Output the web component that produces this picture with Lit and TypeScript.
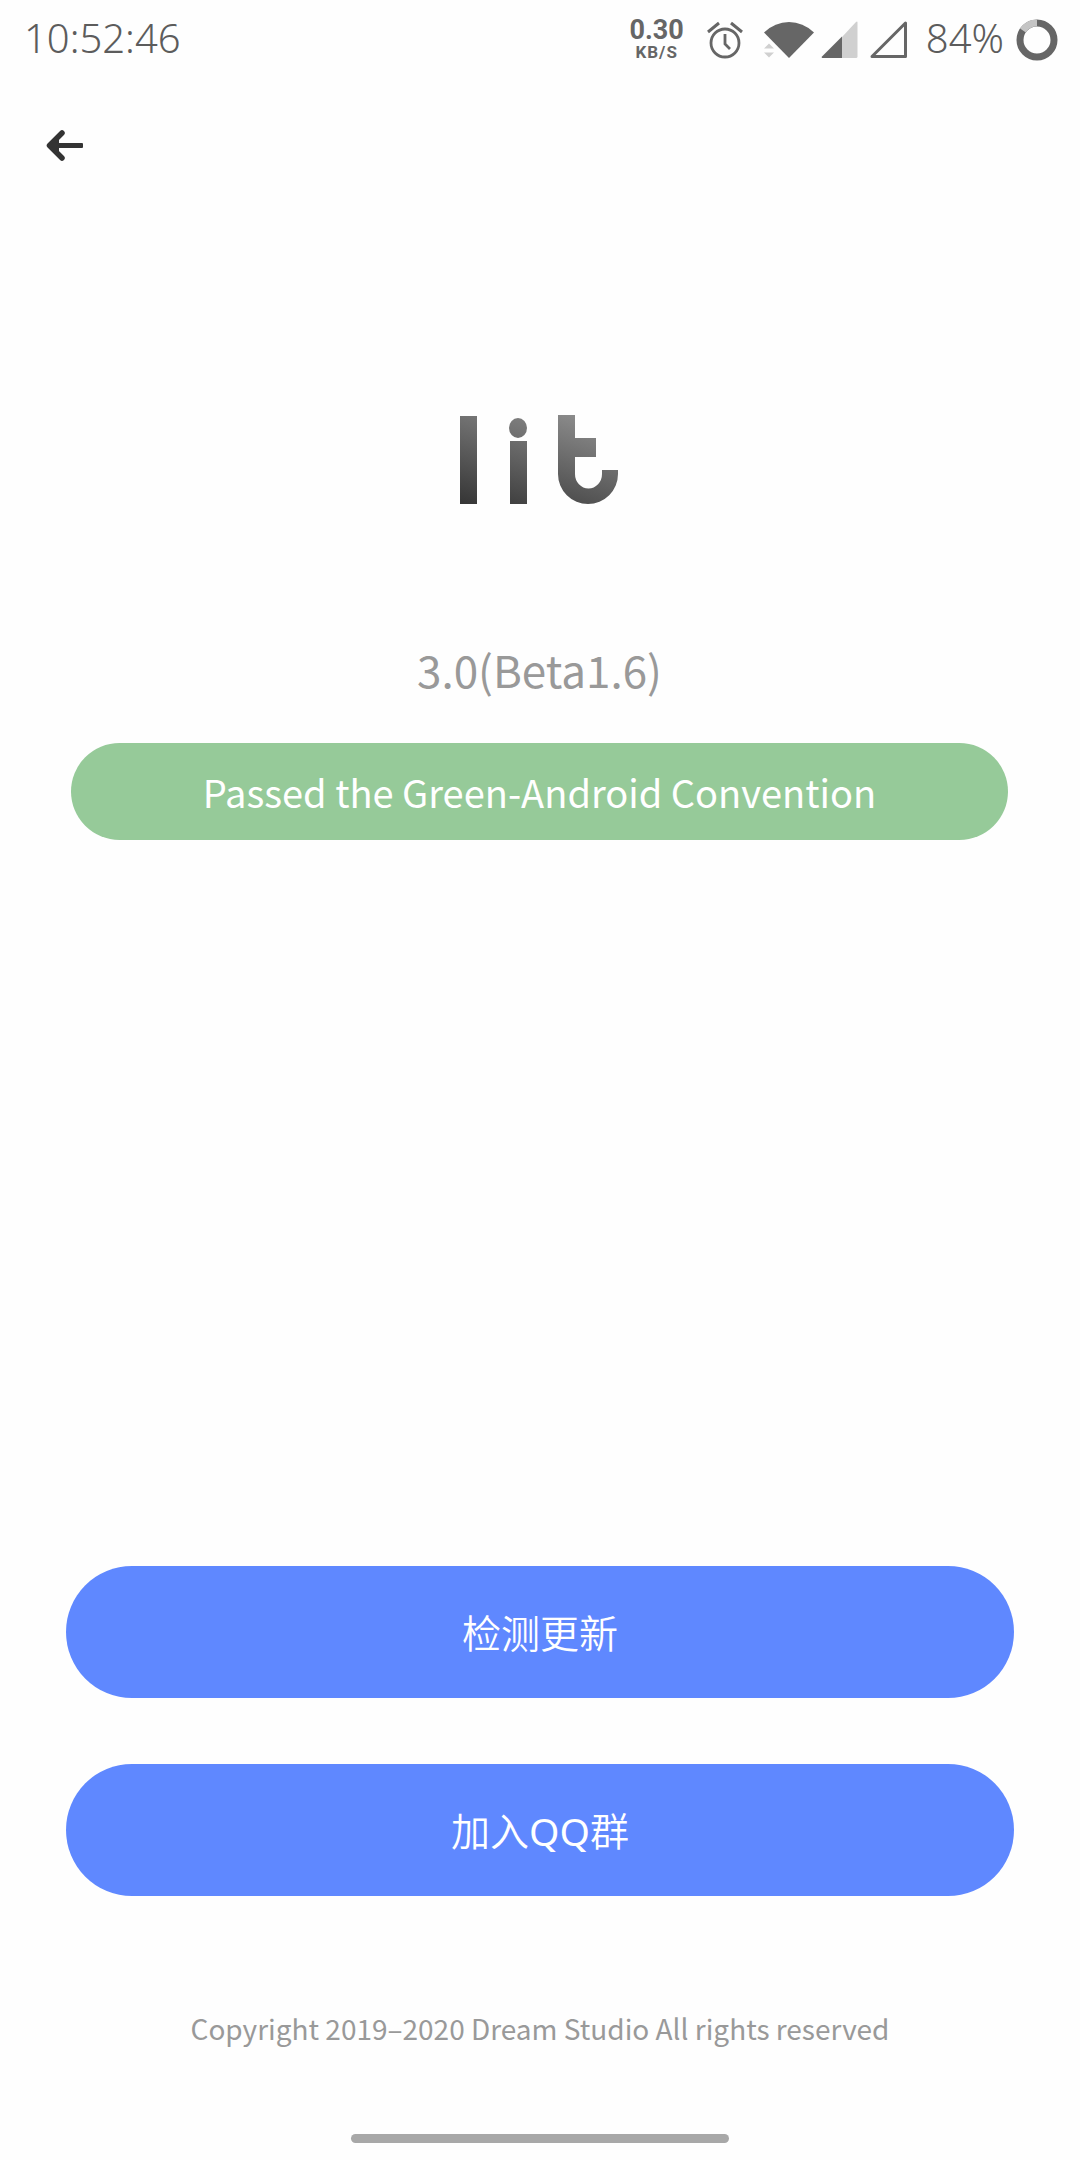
import { LitElement, html, css, svg } from "lit";
import { customElement, property } from "lit/decorators.js";

@customElement("status-bar")
class StatusBar extends LitElement {
  @property() time = "";
  @property() speed = "";
  @property({ type: Number }) battery = 0;

  static styles = css`
    :host {
      display: flex;
      align-items: center;
      justify-content: space-between;
      height: 80px;
      padding: 0 20px 0 24px;
      color: #5c5c5c;
      font-family: "Noto Sans", sans-serif;
      font-size: 40px;
      font-weight: 300;
      line-height: 56px;
    }
    .time,
    .level {
      padding-bottom: 4px;
    }
    .tray {
      display: flex;
      align-items: center;
      gap: 4px;
    }
    .speed {
      display: flex;
      flex-direction: column;
      align-items: center;
      margin-right: 16px;
      color: #666;
      font-family: Roboto, sans-serif;
      font-weight: 700;
    }
    .rate {
      font-size: 27px;
      line-height: 24px;
    }
    .unit {
      font-size: 17px;
      line-height: 20px;
      letter-spacing: 1px;
    }
    .level {
      margin: 0 6px 0 12px;
    }
    svg {
      display: block;
    }
  `;

  render() {
    const c = 2 * Math.PI * 17;
    const gap = (c * (100 - this.battery)) / 100;
    return html`
      <span class="time">${this.time}</span>
      <div class="tray">
        <div class="speed">
          <span class="rate">${this.speed}</span>
          <span class="unit">KB/S</span>
        </div>
        <svg width="48" height="44" viewBox="0 0 48 44" fill="none" stroke="#666" stroke-width="2.800" aria-hidden="true">
          <circle cx="21" cy="25" r="14" />
          <path d="M21 16v10l5 5" />
          <path d="M4 14l11-9M38 14L27 5" stroke-width="3" />
        </svg>
        <svg width="60" height="44" viewBox="0 0 60 44" aria-hidden="true">
          <path d="M8 14.500Q19 4 33 4t25 10.500L33 40z" fill="#666" />
          <path d="M8 30.500l5-5 5 5zM8 34.500l5 5 5-5z" fill="#d0d0d0" />
        </svg>
        <svg width="40" height="44" viewBox="0 0 40 44" aria-hidden="true">
          <path d="M22 19L36 4q1.500-1 1.500.5V38.500q0 1.500-1.500 1.500H22z" fill="#d0d0d0" />
          <path d="M22 18.500V40H2.500q-1.500 0-.5-1.500z" fill="#666" />
        </svg>
        <svg width="46" height="44" viewBox="0 0 46 44" fill="none" aria-hidden="true">
          <path d="M41.500 5V38.500H8z" stroke="#666" stroke-width="3" stroke-linejoin="round" />
        </svg>
        <span class="level">${this.battery}%</span>
        <svg width="46" height="44" viewBox="0 0 46 44" fill="none" stroke-width="7" aria-hidden="true">
          <circle cx="23" cy="22" r="17" stroke="#666" />
          ${svg`<circle cx="23" cy="22" r="17" stroke="#c4c4c4"
            stroke-dasharray="${gap} ${c - gap}" stroke-dashoffset="${gap}"
            transform="rotate(-90 23 22)" />`}
        </svg>
      </div>
    `;
  }
}

@customElement("app-root")
class AppRoot extends LitElement {
  static styles = css`
    :host {
      display: flex;
      flex-direction: column;
      box-sizing: border-box;
      min-height: 100vh;
      background: #fefefe;
      color: #999;
      font-family: "Noto Sans CJK SC", "Noto Sans", sans-serif;
    }
    .toolbar {
      display: flex;
      padding: 28px 28px;
    }
    button {
      border: 0;
      font: inherit;
      cursor: pointer;
    }
    .back {
      padding: 12px 16px;
      background: none;
    }
    svg {
      display: block;
    }
    .hero {
      display: flex;
      flex-direction: column;
      align-items: center;
      flex: 1;
      padding: 201px 72px 0 71px;
    }
    h1,
    p {
      margin: 0;
      font-weight: 400;
    }
    .version {
      margin-top: 132px;
      font-size: 44px;
      line-height: 64px;
    }
    .badge {
      box-sizing: border-box;
      width: 100%;
      margin-top: 42px;
      padding: 20px;
      border-radius: 49px;
      background: #96ca99;
      color: #fff;
      font-size: 38px;
      line-height: 57px;
      text-align: center;
    }
    .actions {
      display: flex;
      flex-direction: column;
      gap: 66px;
      padding: 0 66px;
    }
    .action {
      padding: 39px 38px 37px;
      border-radius: 66px;
      background: #5f88ff;
      color: #fff;
      font-family: "Noto Sans", "Noto Sans CJK SC", sans-serif;
      font-size: 39px;
      font-weight: 350;
      line-height: 56px;
    }
    .latin {
      font-weight: 400;
    }
    footer {
      display: flex;
      flex-direction: column;
      align-items: center;
      padding: 112px 0 17px;
      font-size: 28px;
      line-height: 40px;
    }
    .handle {
      width: 35%;
      height: 9px;
      margin-top: 86px;
      border-radius: 5px;
      background: #a8a8a8;
    }
  `;

  render() {
    return html`
      <status-bar time="10:52:46" speed="0.30" battery="84"></status-bar>
      <nav class="toolbar">
        <button class="back" aria-label="Back">
          <svg width="42" height="52" viewBox="0 0 42 52" aria-hidden="true">
            <path d="M5 25.500L15 18v15z" fill="#333" />
            <path d="M18 13L5.500 25.500 18 38" fill="none" stroke="#333" stroke-width="5.500" stroke-linecap="round" stroke-linejoin="round" />
            <rect x="8" y="23" width="31" height="5" rx="1" fill="#333" />
          </svg>
        </button>
      </nav>
      <main class="hero">
        <h1>
          <svg width="162" height="92" viewBox="0 0 162 92" role="img" aria-label="lit">
            <defs>
              <linearGradient id="ink" gradientUnits="userSpaceOnUse" x1="1" y1="91" x2="41" y2="-35">
                <stop offset="0" stop-color="#353535" />
                <stop offset="1" stop-color="#949494" />
              </linearGradient>
            </defs>
            <g fill="url(#ink)">
              <rect x="1" y="3" width="17" height="88" />
              <ellipse cx="59" cy="15" rx="9" ry="10" />
              <rect x="51" y="28" width="17" height="63" />
              <path d="M99 2h17v23h21v19h-21v17a13.500 14.500 0 0 0 27 0v-4h16v4a30 30 0 0 1-60 0z" />
            </g>
          </svg>
        </h1>
        <p class="version">3.0(Beta1.6)</p>
        <p class="badge">Passed the Green-Android Convention</p>
      </main>
      <div class="actions">
        <button class="action">检测更新</button>
        <button class="action">加入<span class="latin">QQ</span>群</button>
      </div>
      <footer>
        <span>Copyright 2019–2020 Dream Studio All rights reserved</span>
        <div class="handle"></div>
      </footer>
    `;
  }
}
